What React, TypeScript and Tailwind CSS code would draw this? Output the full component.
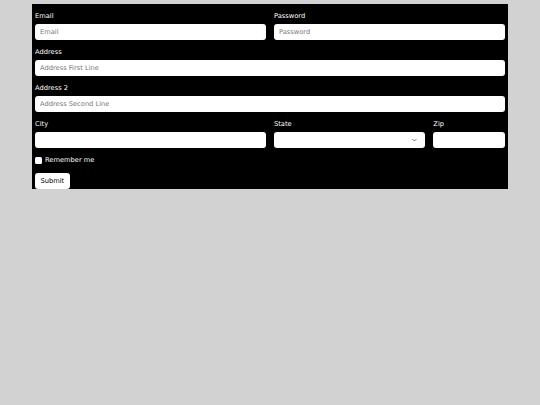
import React from 'react';

const labelCls = 'block h-[12px] leading-[14px] mb-[3px] text-white';
const inputCls =
  'block w-full h-[16px] rounded-[3px] bg-white px-[5px] text-black placeholder:text-[#7a7a7a] outline-none border-0';

export default function App() {
  return (
    <div
      className="min-h-screen w-full bg-[#d3d2d3] pt-1 text-[6.7px]"
      style={{ fontFamily: '"DejaVu Sans", Verdana, sans-serif' }}
    >
      <form className="mx-8 bg-black px-[3px] pt-[5px]">
        <div className="grid grid-cols-12 gap-x-2">
          <div className="col-span-6 mb-[5px]">
            <label className={labelCls}>Email</label>
            <input type="email" placeholder="Email" className={inputCls} />
          </div>
          <div className="col-span-6 mb-[5px]">
            <label className={labelCls}>Password</label>
            <input type="password" placeholder="Password" className={inputCls} />
          </div>
        </div>

        <div className="mb-[5px]">
          <label className={labelCls}>Address</label>
          <input type="text" placeholder="Address First Line" className={inputCls} />
        </div>

        <div className="mb-[5px]">
          <label className={labelCls}>Address 2</label>
          <input type="text" placeholder="Address Second Line" className={inputCls} />
        </div>

        <div className="grid grid-cols-12 gap-x-2">
          <div className="col-span-6 mb-[5px]">
            <label className={labelCls}>City</label>
            <input type="text" className={inputCls} />
          </div>
          <div className="col-span-4 mb-[5px]">
            <label className={labelCls}>State</label>
            <div className="relative">
              <select className={inputCls + ' appearance-none'} defaultValue="">
                <option value=""></option>
              </select>
              <svg
                className="pointer-events-none absolute right-[8px] top-[6px]"
                width="5"
                height="4"
                viewBox="0 0 5 4"
              >
                <path d="M0.5 1 L2.5 3 L4.5 1" fill="none" stroke="#555" strokeWidth="0.8" />
              </svg>
            </div>
          </div>
          <div className="col-span-2 mb-[5px]">
            <label className={labelCls}>Zip</label>
            <input type="text" className={inputCls} />
          </div>
        </div>

        <div className="flex h-[14px] items-center gap-[3px] mb-[6px]">
          <span className="block h-[7px] w-[7px] rounded-[1.5px] bg-white" />
          <span className="text-white">Remember me</span>
        </div>

        <button
          type="button"
          className="block h-[16px] rounded-[3px] bg-white px-[5.5px] text-black"
        >
          Submit
        </button>
      </form>
    </div>
  );
}
